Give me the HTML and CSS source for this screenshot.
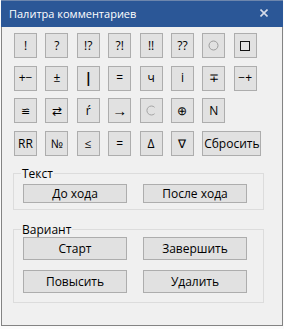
FILE: index.html
```html
<!DOCTYPE html>
<html lang="ru">
<head>
  <meta charset="UTF-8" />
  <meta name="viewport" content="width=device-width, initial-scale=1" />
  <title>Палитра комментариев</title>
  <link rel="stylesheet" href="styles.css">
</head>
<body>
  <div class="window">
    <div class="titlebar">
      <span class="title">Палитра комментариев</span>
      <button class="close" aria-label="Закрыть">
        <svg width="8" height="8" viewBox="0 0 8 8"><path d="M0.5 0.5 L7.5 7.5 M7.5 0.5 L0.5 7.5" stroke="#d6dcea" stroke-width="1.6" fill="none"/></svg>
      </button>
    </div>

    <div class="content">
      <div class="palette">
        <button class="sym">!</button>
        <button class="sym">?</button>
        <button class="sym">!?</button>
        <button class="sym">?!</button>
        <button class="sym">!!</button>
        <button class="sym">??</button>
        <button class="sym">
          <svg width="11" height="11" viewBox="0 0 11 11"><circle cx="5.5" cy="5.5" r="4.5" stroke="#9c9c9c" stroke-width="1" fill="none"/></svg>
        </button>
        <button class="sym">
          <svg width="10" height="10" viewBox="0 0 10 10"><rect x="0.5" y="0.5" width="9" height="9" stroke="#111" stroke-width="1" fill="none"/></svg>
        </button>

        <button class="sym">+−</button>
        <button class="sym">±</button>
        <button class="sym bar">|</button>
        <button class="sym">=</button>
        <button class="sym">ч</button>
        <button class="sym">i</button>
        <button class="sym">∓</button>
        <button class="sym">−+</button>

        <button class="sym small">≌</button>
        <button class="sym">⇄</button>
        <button class="sym">ŕ</button>
        <button class="sym arrow">→</button>
        <button class="sym">
          <svg width="11" height="11" viewBox="0 0 11 11"><path d="M8.6 2.3 A4.5 4.5 0 1 0 8.6 8.7" stroke="#a4a4a4" stroke-width="1" fill="none"/></svg>
        </button>
        <button class="sym">⊕</button>
        <button class="sym">N</button>
        <span></span>

        <button class="sym">RR</button>
        <button class="sym">№</button>
        <button class="sym">≤</button>
        <button class="sym">=</button>
        <button class="sym">Δ</button>
        <button class="sym">∇</button>
        <button class="sym reset">Сбросить</button>
      </div>

      <fieldset class="group group-text">
        <legend>Текст</legend>
        <div class="pair">
          <button class="wide short">До хода</button>
          <button class="wide short">После хода</button>
        </div>
      </fieldset>

      <fieldset class="group group-variant">
        <legend>Вариант</legend>
        <div class="pair">
          <button class="wide">Старт</button>
          <button class="wide">Завершить</button>
          <button class="wide">Повысить</button>
          <button class="wide">Удалить</button>
        </div>
      </fieldset>
    </div>
  </div>
</body>
</html>
```

FILE: styles.css
```css
html, body {
  margin: 0;
  background: #fbfbfb;
  font-family: "Open Sans", "Noto Sans", sans-serif;
  font-size: 12px;
  color: #000;
}
.window {
  width: 282px;
  height: 326px;
  margin-left: 1px;
  box-sizing: border-box;
  border: 1px solid #838383;
  border-top: none;
  background: #f0f0f0;
}
.titlebar {
  height: 27px;
  margin: 0 -1px;
  background: #2b5797;
  border-top: 1px solid #6d86ad;
  box-sizing: border-box;
  display: flex;
  align-items: center;
  justify-content: space-between;
  padding: 0 15px 1px 8px;
}
.title {
  color: #fff;
  font-size: 11px;
}
.close {
  background: none;
  border: none;
  padding: 0;
  display: flex;
  margin-top: -2px;
}
.content {
  padding: 6px 0 0 11px;
}
button {
  font-family: inherit;
  font-size: 12px;
  color: #000;
  background: #e1e1e1;
  border: 1px solid #adadad;
  border-radius: 0;
  padding: 0;
  box-sizing: border-box;
  cursor: pointer;
}
.palette {
  display: grid;
  grid-template-columns: repeat(8, 23px);
  grid-auto-rows: 25px;
  column-gap: 8.4px;
  row-gap: 7.7px;
  margin-left: 1px;
}
.sym {
  font-size: 12px;
  line-height: 1;
  display: flex;
  align-items: center;
  justify-content: center;
}
.sym.small {
  font-size: 11px;
}
.sym.bar {
  font-weight: bold;
  font-size: 14px;
}
.sym.arrow {
  font-size: 15px;
}
.reset {
  width: 59px;
}
.group {
  margin: 11px 0 0 0;
  width: 251px;
  box-sizing: border-box;
  border: 1px solid #dcdcdc;
  padding: 4px 15px 6px 9px;
}
.group legend {
  padding: 0 1px;
  margin-left: -2px;
  line-height: 13px;
}
.group-variant {
  margin-top: 13px;
  padding-top: 1px;
  padding-bottom: 9px;
}
.pair {
  display: grid;
  grid-template-columns: 104px 104px;
  column-gap: 16px;
  row-gap: 10px;
}
.wide {
  height: 23px;
}
.wide.short {
  height: 19px;
}
```
